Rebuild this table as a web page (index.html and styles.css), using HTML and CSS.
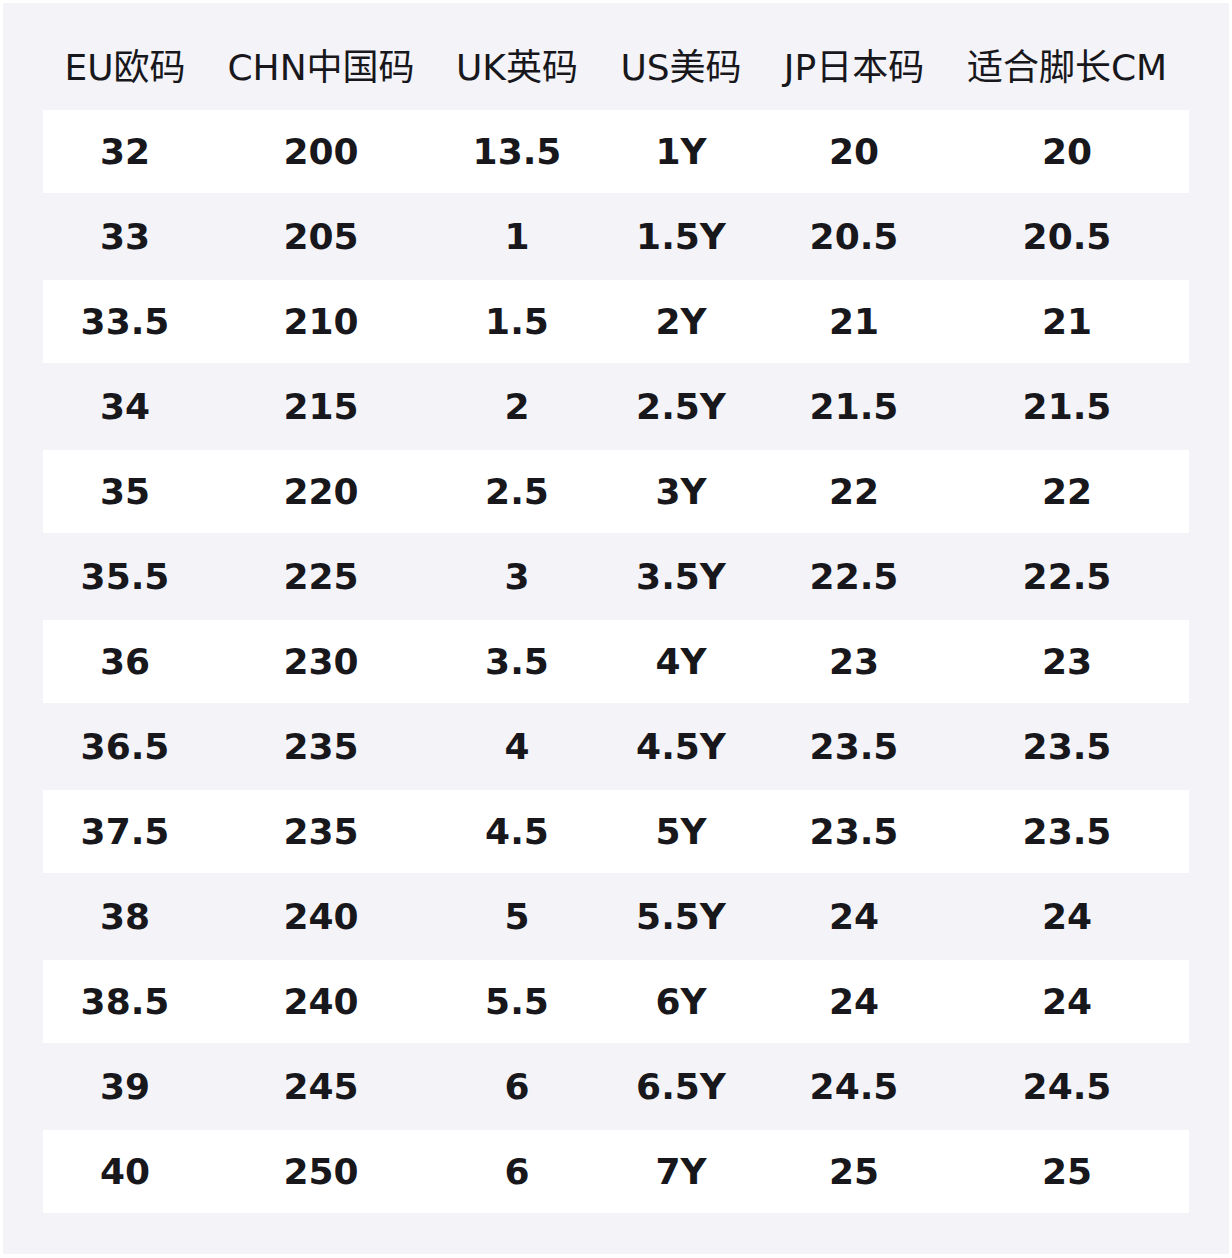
FILE: index.html
```html
<!DOCTYPE html>
<html lang="zh">
<head>
<meta charset="utf-8">
<title>尺码表</title>
<link rel="stylesheet" href="styles.css">
</head>
<body>
<div class="sheet">
  <table class="size-table">
    <colgroup>
      <col class="c-eu"><col class="c-chn"><col class="c-uk"><col class="c-us"><col class="c-jp"><col class="c-cm">
    </colgroup>
    <thead>
      <tr><th>EU欧码</th><th>CHN中国码</th><th>UK英码</th><th>US美码</th><th>JP日本码</th><th>适合脚长CM</th></tr>
    </thead>
    <tbody>
      <tr class="odd"><td>32</td><td>200</td><td>13.5</td><td>1Y</td><td>20</td><td>20</td></tr>
      <tr><td>33</td><td>205</td><td>1</td><td>1.5Y</td><td>20.5</td><td>20.5</td></tr>
      <tr class="odd"><td>33.5</td><td>210</td><td>1.5</td><td>2Y</td><td>21</td><td>21</td></tr>
      <tr><td>34</td><td>215</td><td>2</td><td>2.5Y</td><td>21.5</td><td>21.5</td></tr>
      <tr class="odd"><td>35</td><td>220</td><td>2.5</td><td>3Y</td><td>22</td><td>22</td></tr>
      <tr><td>35.5</td><td>225</td><td>3</td><td>3.5Y</td><td>22.5</td><td>22.5</td></tr>
      <tr class="odd"><td>36</td><td>230</td><td>3.5</td><td>4Y</td><td>23</td><td>23</td></tr>
      <tr><td>36.5</td><td>235</td><td>4</td><td>4.5Y</td><td>23.5</td><td>23.5</td></tr>
      <tr class="odd"><td>37.5</td><td>235</td><td>4.5</td><td>5Y</td><td>23.5</td><td>23.5</td></tr>
      <tr><td>38</td><td>240</td><td>5</td><td>5.5Y</td><td>24</td><td>24</td></tr>
      <tr class="odd"><td>38.5</td><td>240</td><td>5.5</td><td>6Y</td><td>24</td><td>24</td></tr>
      <tr><td>39</td><td>245</td><td>6</td><td>6.5Y</td><td>24.5</td><td>24.5</td></tr>
      <tr class="odd"><td>40</td><td>250</td><td>6</td><td>7Y</td><td>25</td><td>25</td></tr>
    </tbody>
  </table>
</div>
</body>
</html>
```
FILE: styles.css
```css
html, body {
  margin: 0;
  padding: 0;
  background: #ffffff;
}

body {
  font-family: "DejaVu Sans", "Noto Sans CJK SC", sans-serif;
  color: #17171c;
}

.sheet {
  margin: 3px 3px 4px 3px;
  padding: 40px 40px 39px 40px;
  background: #f4f3f8;
}

.size-table {
  width: 1146px;
  table-layout: fixed;
  border-collapse: separate;
  border-spacing: 0 2px;
}

.c-eu { width: 164px; }
.c-chn { width: 228px; }
.c-uk { width: 164px; }
.c-us { width: 164px; }
.c-jp { width: 182px; }
.c-cm { width: 244px; }

.size-table th {
  font-weight: 400;
  font-size: 36px;
  line-height: 42px;
  height: 42px;
  padding: 2px 0 19px 0;
  text-align: center;
  vertical-align: top;
  white-space: nowrap;
}

.size-table td {
  font-weight: 700;
  font-size: 36px;
  line-height: 42px;
  height: 83px;
  padding: 0;
  text-align: center;
  vertical-align: middle;
  white-space: nowrap;
}

.size-table tr.odd td {
  background: #ffffff;
}
```
